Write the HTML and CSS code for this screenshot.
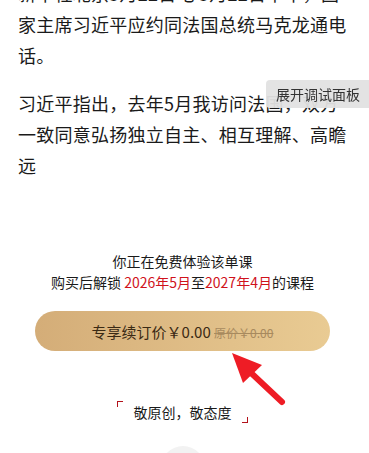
FILE: index.html
```html
<html lang="zh-CN">
<head>
    <meta charset="UTF-8">
    <meta name="viewport" content="width=device-width, initial-scale=1.0">
    <title>课程详情</title>
    <link rel="stylesheet" href="styles.css">
</head>
<body>
    <main class="page">
        <article class="article">
            <p>新华社北京5月22日电 5月22日下午，国家主席习近平应约同法国总统马克龙通电话。</p>
            <p>习近平指出，去年5月我访问法国，双方一致同意弘扬独立自主、相互理解、高瞻远</p>
        </article>

        <section class="trial">
            <p class="trial-tip">你正在免费体验该单课</p>
            <p class="trial-tip">购买后解锁 <span class="red">2026年5月</span>至<span class="red">2027年4月</span>的课程</p>
            <button class="buy-btn">专享续订价￥0.00 <span class="old-price">原价￥0.00</span></button>
        </section>

        <div class="slogan">
            <span class="corner corner-tl"></span>
            敬原创，敬态度
            <span class="corner corner-br"></span>
        </div>

        <div class="more-dot"></div>
    </main>

    <div class="debug-btn">展开调试面板</div>

    <!-- red arrow annotation -->
    <svg class="arrow" width="70" height="70" viewBox="0 0 70 70">
        <line x1="18" y1="19" x2="51" y2="50" stroke="#ee1c25" stroke-width="6" stroke-linecap="round"/>
        <polygon points="1,1 31,13 12,31" fill="#ee1c25"/>
    </svg>
</body>
</html>
```

FILE: styles.css
```css
/* page */
body {
    margin: 0;
    padding: 0;
    background: #fff;
    font-family: "Noto Sans CJK SC", "Noto Sans", sans-serif;
    color: #1a1a1a;
    overflow: hidden;
}

.page {
    padding: 0 22px 0 18px;
    margin-top: -22px;
}

.article p {
    margin: 0 0 17px;
    font-size: 18px;
    letter-spacing: 0.25px;
    line-height: 31px;
}

.trial {
    margin-top: 70px;
    text-align: center;
}

.trial-tip {
    margin: 0;
    font-size: 14px;
    line-height: 21px;
}

.red {
    color: #d0121b;
}

.buy-btn {
    display: block;
    width: 295px;
    height: 40px;
    margin: 18px auto 0;
    border: none;
    border-radius: 20px;
    background: linear-gradient(90deg, #d4ad78, #e9cb93);
    font-family: inherit;
    font-size: 15px;
    color: #3b2a14;
    cursor: pointer;
}

.old-price {
    font-size: 12px;
    color: #a88a5e;
    text-decoration: line-through;
}

.slogan {
    position: relative;
    width: 131px;
    margin: 51px auto 0;
    font-size: 14px;
    line-height: 20px;
    text-align: center;
}

.corner {
    position: absolute;
    width: 5px;
    height: 5px;
    border-color: #b3121b;
    border-style: solid;
    border-width: 0;
}

.corner-tl {
    left: 0;
    top: -1px;
    border-top-width: 1.5px;
    border-left-width: 1.5px;
}

.corner-br {
    right: 0;
    bottom: -1px;
    border-bottom-width: 1.5px;
    border-right-width: 1.5px;
}

.more-dot {
    width: 44px;
    height: 44px;
    margin: 24px auto 0;
    border-radius: 50%;
    background: #f2f2f2;
}

/* debug toggle floats over content */
.debug-btn {
    position: fixed;
    right: 0;
    top: 80px;
    padding: 0 9px 0 10px;
    height: 28px;
    line-height: 28px;
    font-size: 14px;
    color: #333;
    background: rgba(225, 225, 225, 0.95);
    border-radius: 4px 0 0 4px;
}

.arrow {
    position: absolute;
    left: 231px;
    top: 352px;
}
```
